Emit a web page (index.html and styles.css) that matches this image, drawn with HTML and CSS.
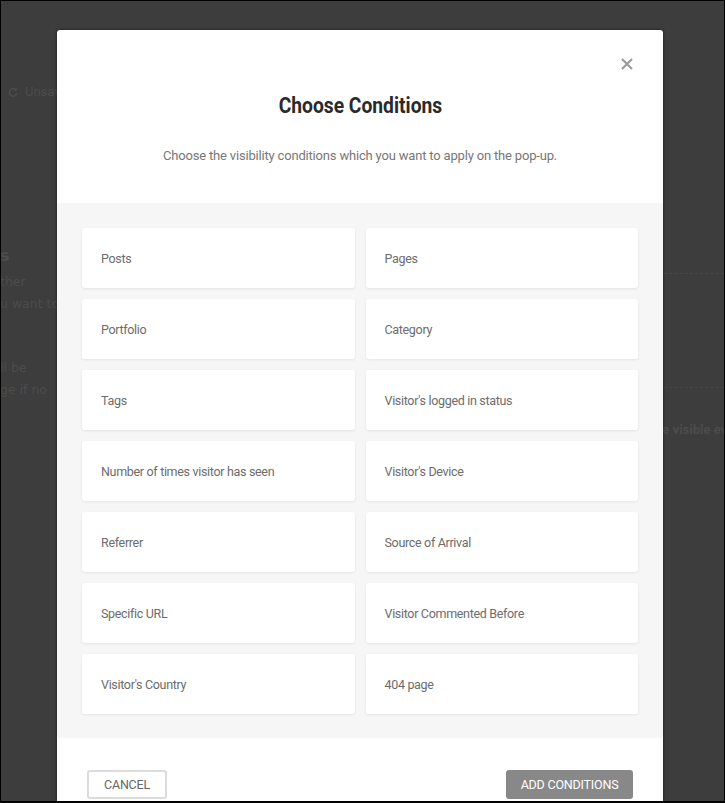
FILE: index.html
```html
<!DOCTYPE html>
<html>
<head>
  <meta charset="utf-8">
  <title>Choose Conditions</title>
  <link rel="stylesheet" href="styles.css">
</head>
<body>

  <div class="tela">

    <!-- pagina por tras do modal -->
    <div class="pagina">
      <div class="salvo">
        <svg width="10" height="10" viewBox="0 0 16 16"><path d="M13 5a6 6 0 1 0 1 5" fill="none" stroke="currentColor" stroke-width="2.4"/><path d="M14 1v5h-5z" fill="currentColor"/></svg>
        Unsaved changes
      </div>
      <div class="lado-esq">
        <p class="tit">s</p>
        <p>ther</p>
        <p>u want to</p>
        <p class="esp">ll be</p>
        <p>ge if no</p>
      </div>
      <div class="lado-dir">
        <div class="tracejado"></div>
        <div class="tracejado t2"></div>
        <p>Be visible everywhere</p>
      </div>
    </div>

    <div class="modal">
      <div class="cabecalho">
        <button class="fechar" title="Close">
          <svg width="12" height="12" viewBox="0 0 12 12"><path d="M1 1l10 10M11 1L1 11" stroke="currentColor" stroke-width="2.2"/></svg>
        </button>
        <h2>Choose Conditions</h2>
        <p>Choose the visibility conditions which you want to apply on the pop-up.</p>
      </div>

      <div class="condicoes">
        <div class="cond">Posts</div>
        <div class="cond">Pages</div>
        <div class="cond">Portfolio</div>
        <div class="cond">Category</div>
        <div class="cond">Tags</div>
        <div class="cond">Visitor's logged in status</div>
        <div class="cond">Number of times visitor has seen</div>
        <div class="cond">Visitor's Device</div>
        <div class="cond">Referrer</div>
        <div class="cond">Source of Arrival</div>
        <div class="cond">Specific URL</div>
        <div class="cond">Visitor Commented Before</div>
        <div class="cond">Visitor's Country</div>
        <div class="cond">404 page</div>
      </div>

      <div class="rodape">
        <button class="btn-cancelar">CANCEL</button>
        <button class="btn-adicionar">ADD CONDITIONS</button>
      </div>
    </div>

  </div>

</body>
</html>
```

FILE: styles.css
```css
body {
  margin: 0;
  font-family: Roboto, "Liberation Sans", sans-serif;
  background: #000;
}

.tela {
  position: relative;
  height: 803px;
  border: 1px solid #000;
  border-bottom-width: 2px;
  box-sizing: border-box;
  background: #3d3d3d;
  overflow: hidden;
}

/* conteudo apagado por baixo */
.pagina {
  color: #4c4c4c;
  font-size: 13px;
}

.salvo {
  display: flex;
  align-items: center;
  gap: 7px;
  padding: 83px 0 0 7px;
}

.lado-esq {
  margin: 146px 0 0 -1px;
  font-family: "DejaVu Sans", sans-serif;
  font-size: 12.5px;
}

.lado-esq p {
  margin: 0;
  line-height: 22px;
  white-space: nowrap;
}

.lado-esq .tit {
  font-size: 16px;
  font-weight: bold;
  margin-bottom: 4px;
}

.lado-esq .esp {
  margin-top: 42px;
}

.lado-dir {
  position: absolute;
  left: 653px;
  top: 272px;
  width: 80px;
}

.tracejado {
  border-top: 1px dashed #474747;
  margin-bottom: 113px;
}

.tracejado.t2 {
  margin-bottom: 34px;
}

.lado-dir p {
  margin: 0;
  font-weight: bold;
  white-space: nowrap;
}

/* modal */
.modal {
  position: absolute;
  left: 56px;
  top: 29px;
  width: 606px;
  height: 800px;
  background: #fff;
  border-radius: 3px 3px 0 0;
  box-shadow: 0 0 3px rgba(0, 0, 0, 0.6);
}

.cabecalho {
  position: relative;
  height: 173px;
  box-sizing: border-box;
  padding-top: 62px;
  text-align: center;
}

.fechar {
  position: absolute;
  top: 28px;
  right: 30px;
  border: 0;
  background: none;
  padding: 0;
  color: #9a9a9a;
  cursor: pointer;
}

.cabecalho h2 {
  display: inline-block;
  margin: 0;
  font-size: 22px;
  font-weight: 700;
  color: #2a2a2a;
  line-height: 28px;
  transform: scaleX(0.875);
}

.cabecalho p {
  margin: 28px 0 0;
  font-size: 13px;
  color: #777;
  letter-spacing: -0.18px;
}

.condicoes {
  display: grid;
  grid-template-columns: 1fr 1fr;
  gap: 11px 11px;
  padding: 25px 25px 24px;
  background: #f6f6f6;
}

.cond {
  height: 60px;
  display: flex;
  align-items: center;
  padding: 0 19px;
  background: #fff;
  border-radius: 3px;
  box-shadow: 0 1px 3px rgba(0, 0, 0, 0.08);
  font-size: 12.5px;
  letter-spacing: -0.32px;
  color: #6c6c6c;
  cursor: pointer;
}

.rodape {
  display: flex;
  justify-content: space-between;
  align-items: center;
  padding: 32px 30px 0 30px;
}

.rodape button {
  font-family: inherit;
  font-size: 12.5px;
  letter-spacing: -0.2px;
  height: 29px;
  border-radius: 3px;
  cursor: pointer;
}

.btn-cancelar {
  width: 80px;
  background: #fff;
  border: 2px solid #dcdcdc;
  color: #666;
}

.btn-adicionar {
  width: 127px;
  background: #888;
  border: 0;
  color: #fff;
}
```
